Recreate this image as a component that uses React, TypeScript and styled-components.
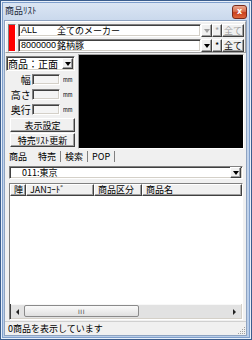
import styled, { createGlobalStyle } from 'styled-components';

const GlobalStyle = createGlobalStyle`
  html, body {
    margin: 0;
    padding: 0;
  }
  body {
    width: 252px;
    height: 340px;
    overflow: hidden;
    font-family: "Noto Sans CJK JP", "DejaVu Sans", sans-serif;
    font-size: 9px;
    color: #000;
  }
  * {
    box-sizing: border-box;
  }
`;

const sunken = `
  border: 1px solid;
  border-color: #808080 #ffffff #ffffff #808080;
  box-shadow: inset 1px 1px 0 #404040, inset -1px -1px 0 #d4d0c8;
`;

const raised = `
  border: 1px solid;
  border-color: #ffffff #404040 #404040 #ffffff;
  box-shadow: inset -1px -1px 0 #a0a0a0;
`;

const Window = styled.div`
  width: 252px;
  height: 340px;
  display: flex;
  flex-direction: column;
  border: 1px solid #3b5d8d;
  background: linear-gradient(180deg, #dde7f4 0px, #c9d8ec 20px, #b9cde8 100%);
  box-shadow: inset 0 0 0 1px #e8f0fa, inset 0 0 0 2px #7f9fcc;
`;

const TitleBar = styled.div`
  height: 18px;
  flex-shrink: 0;
  display: flex;
  align-items: center;
  justify-content: space-between;
  padding: 0 4px 0 4px;
`;

const TitleText = styled.span`
  font-size: 9px;
  color: #1e2b3c;
`;

const CloseButton = styled.div`
  width: 15px;
  height: 14px;
  margin-top: 3px;
  border: 1px solid #7a2a1a;
  border-radius: 3px;
  background: linear-gradient(180deg, #eba78f 0%, #d9704f 45%, #c8401e 55%, #e0673c 100%);
  color: #fff;
  font-size: 8px;
  font-weight: bold;
  line-height: 11px;
  text-align: center;
  font-family: "DejaVu Sans", sans-serif;
`;

const Client = styled.div`
  flex: 1;
  min-height: 0;
  margin: 1px 4px 3px 3px;
  background: #f0f0f0;
  display: flex;
  flex-direction: column;
  border: 1px solid #8ea3c1;
`;

const TopPanel = styled.div`
  flex-shrink: 0;
  display: flex;
  gap: 2px;
  padding: 2px 1px 0 2px;
  border: 1px solid;
  border-color: #ffffff #a0a0a0 #a0a0a0 #ffffff;
`;

const RedBox = styled.div`
  width: 8px;
  background: #ff0000;
  border: 1px solid;
  border-color: #808080 #ffffff #ffffff #808080;
`;

const Rows = styled.div`
  flex: 1;
  display: flex;
  flex-direction: column;
  gap: 2px;
`;

const Row = styled.div`
  display: flex;
  height: 13px;
`;

const Field = styled.div`
  flex: 1;
  display: flex;
  align-items: center;
  background: #fff;
  ${sunken}
  padding-left: 2px;
  font-size: 9px;
  line-height: 11px;
  white-space: nowrap;
  overflow: hidden;
`;

const Code = styled.span`
  width: 36px;
  font-family: "Liberation Sans", sans-serif;
  font-size: 9px;
`;

const SmallButton = styled.div<{ $w: number; $disabled?: boolean }>`
  width: ${(p) => p.$w}px;
  display: flex;
  align-items: center;
  justify-content: center;
  background: #f0f0f0;
  ${raised}
  font-size: 9px;
  line-height: 11px;
  color: ${(p) => (p.$disabled ? '#a0a0a0' : '#000')};
`;

const Arrow = styled.span<{ $disabled?: boolean }>`
  width: 0;
  height: 0;
  border-left: 3px solid transparent;
  border-right: 3px solid transparent;
  border-top: 4px solid ${(p) => (p.$disabled ? '#a0a0a0' : '#000')};
`;

const Middle = styled.div`
  flex-shrink: 0;
  display: flex;
  gap: 3px;
  padding: 1px 2px 0 1px;
`;

const LeftColumn = styled.div`
  width: 69px;
  display: flex;
  flex-direction: column;
`;

const Select = styled.div`
  height: 15px;
  margin-top: 2px;
  display: flex;
  align-items: center;
  background: #fff;
  ${sunken}
  padding-left: 1px;
  font-size: 10px;
  margin-bottom: 1px;
`;

const SelectText = styled.span`
  flex: 1;
  white-space: nowrap;
`;

const DropButton = styled.div`
  width: 11px;
  height: 11px;
  display: flex;
  align-items: center;
  justify-content: center;
  background: #f0f0f0;
  ${raised}
  margin-right: 1px;
`;

const SizeRow = styled.div`
  display: flex;
  align-items: center;
  height: 15px;
`;

const SizeLabel = styled.span`
  width: 26px;
  text-align: right;
  font-size: 10px;
  line-height: 12px;
  padding-right: 1px;
`;

const SizeInput = styled.div`
  width: 29px;
  height: 11px;
  background: #f4f4f4;
  ${sunken}
`;

const Unit = styled.span`
  font-size: 7px;
  color: #000;
  margin-left: 3px;
  font-family: "Liberation Sans", sans-serif;
  transform: scaleX(0.8);
  transform-origin: left center;
`;

const PanelButton = styled.div`
  height: 14px;
  margin: 1px 0 0 4px;
  display: flex;
  align-items: center;
  justify-content: center;
  background: #f0f0f0;
  ${raised}
  font-size: 9px;
  white-space: nowrap;
`;

const Preview = styled.div`
  flex: 1;
  height: 95px;
  background: #000;
  border: 1px solid;
  border-color: #a0a0a0 #ffffff #ffffff #a0a0a0;
`;

const Tabs = styled.div`
  flex-shrink: 0;
  display: flex;
  align-items: center;
  height: 14px;
  padding-left: 2px;
`;

const Tab = styled.span<{ $active?: boolean }>`
  padding: 0 4px;
  font-size: 9px;
  line-height: 11px;
  border-right: 1px solid #808080;
  ${(p) => (p.$active ? 'padding-left: 2px; padding-right: 7px; border-right: none;' : '')}
`;

const Combo = styled.div`
  flex-shrink: 0;
  height: 13px;
  margin: 3px 3px 0 4px;
  display: flex;
  align-items: center;
  background: #fff;
  ${sunken}
  font-size: 9px;
`;

const ComboText = styled.span`
  flex: 1;
  padding-left: 12px;
  white-space: nowrap;
`;

const List = styled.div`
  flex: 1;
  min-height: 0;
  margin: 4px 3px 1px 4px;
  display: flex;
  flex-direction: column;
  background: #fff;
  ${sunken}
`;

const Header = styled.div`
  flex-shrink: 0;
  display: flex;
  height: 12px;
  background: #f0f0f0;
`;

const HeaderCell = styled.div<{ $w?: number }>`
  ${(p) => (p.$w ? `width: ${p.$w}px;` : 'flex: 1;')}
  ${raised}
  font-size: 9px;
  line-height: 10px;
  padding-left: 3px;
  white-space: nowrap;
  overflow: hidden;
`;

const ListBody = styled.div`
  flex: 1;
  min-height: 0;
  background: #fff;
`;

const HScroll = styled.div`
  flex-shrink: 0;
  height: 14px;
  display: flex;
  align-items: stretch;
  background: #e2e2e2;
  border-top: 1px solid #f8f8f8;
  margin: 0 1px 1px 1px;
`;

const ScrollArrow = styled.div`
  width: 13px;
  display: flex;
  align-items: center;
  justify-content: center;
`;

const ArrowSide = styled.span<{ $dir: 'left' | 'right' }>`
  width: 0;
  height: 0;
  border-top: 3px solid transparent;
  border-bottom: 3px solid transparent;
  ${(p) => (p.$dir === 'left' ? 'border-right: 3px solid #222;' : 'border-left: 3px solid #222;')}
`;

const Thumb = styled.div`
  width: 115px;
  margin: 0 0 1px;
  display: flex;
  align-items: center;
  justify-content: center;
  background: linear-gradient(180deg, #fafafa, #e0e0e0);
  border: 1px solid #8a8a8a;
  border-radius: 2px;
  font-size: 6px;
  color: #444;
  font-family: "DejaVu Sans", sans-serif;
  letter-spacing: 0.5px;
`;

const Track = styled.div`
  flex: 1;
`;

const StatusBar = styled.div`
  flex-shrink: 0;
  height: 14px;
  display: flex;
  align-items: center;
  justify-content: space-between;
  padding-left: 3px;
  border-top: 1px solid #d0d0d0;
  font-size: 9px;
`;

const Grip = styled.svg`
  align-self: flex-end;
`;

export default function App() {
  return (
    <>
      <GlobalStyle />
      <Window>
        <TitleBar>
          <TitleText>商品ﾘｽﾄ</TitleText>
          <CloseButton>x</CloseButton>
        </TitleBar>
        <Client>
          <TopPanel>
            <RedBox />
            <Rows>
              <Row>
                <Field>
                  <Code>ALL</Code>
                  全てのメーカー
                </Field>
                <SmallButton $w={11} $disabled>
                  <Arrow $disabled />
                </SmallButton>
                <SmallButton $w={10} $disabled>*</SmallButton>
                <SmallButton $w={22} $disabled>全て</SmallButton>
              </Row>
              <Row>
                <Field>
                  <Code>8000000</Code>
                  銘柄豚
                </Field>
                <SmallButton $w={11}>
                  <Arrow />
                </SmallButton>
                <SmallButton $w={10}>*</SmallButton>
                <SmallButton $w={22}>全て</SmallButton>
              </Row>
            </Rows>
          </TopPanel>
          <Middle>
            <LeftColumn>
              <Select>
                <SelectText>商品：正面</SelectText>
                <DropButton>
                  <Arrow />
                </DropButton>
              </Select>
              <SizeRow>
                <SizeLabel>幅</SizeLabel>
                <SizeInput />
                <Unit>mm</Unit>
              </SizeRow>
              <SizeRow>
                <SizeLabel>高さ</SizeLabel>
                <SizeInput />
                <Unit>mm</Unit>
              </SizeRow>
              <SizeRow>
                <SizeLabel>奥行</SizeLabel>
                <SizeInput />
                <Unit>mm</Unit>
              </SizeRow>
              <PanelButton>表示設定</PanelButton>
              <PanelButton>特売ﾘｽﾄ更新</PanelButton>
            </LeftColumn>
            <Preview />
          </Middle>
          <Tabs>
            <Tab $active>商品</Tab>
            <Tab>特売</Tab>
            <Tab>検索</Tab>
            <Tab>POP</Tab>
          </Tabs>
          <Combo>
            <ComboText>011:東京</ComboText>
            <DropButton>
              <Arrow />
            </DropButton>
          </Combo>
          <List>
            <Header>
              <HeaderCell $w={16}>陣</HeaderCell>
              <HeaderCell $w={68}>JANｺｰﾄﾞ</HeaderCell>
              <HeaderCell $w={48}>商品区分</HeaderCell>
              <HeaderCell>商品名</HeaderCell>
            </Header>
            <ListBody />
            <HScroll>
              <ScrollArrow>
                <ArrowSide $dir="left" />
              </ScrollArrow>
              <Thumb>III</Thumb>
              <Track />
              <ScrollArrow>
                <ArrowSide $dir="right" />
              </ScrollArrow>
            </HScroll>
          </List>
          <StatusBar>
            <span>0商品を表示しています</span>
            <Grip width="10" height="10" viewBox="0 0 10 10">
              <g fill="#a0a0a0">
                <rect x="8" y="2" width="1" height="1" />
                <rect x="6" y="4" width="1" height="1" />
                <rect x="8" y="4" width="1" height="1" />
                <rect x="4" y="6" width="1" height="1" />
                <rect x="6" y="6" width="1" height="1" />
                <rect x="8" y="6" width="1" height="1" />
                <rect x="2" y="8" width="1" height="1" />
                <rect x="4" y="8" width="1" height="1" />
                <rect x="6" y="8" width="1" height="1" />
                <rect x="8" y="8" width="1" height="1" />
              </g>
            </Grip>
          </StatusBar>
        </Client>
      </Window>
    </>
  );
}
